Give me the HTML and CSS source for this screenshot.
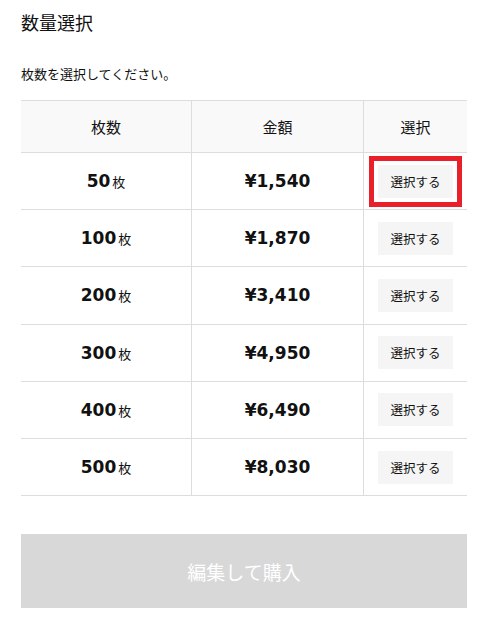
FILE: index.html
```html
<!DOCTYPE html>
<html lang="ja">
<head>
<meta charset="utf-8">
<link rel="stylesheet" href="styles.css">
</head>
<body>
<div class="page">
  <h2 class="title">数量選択</h2>
  <p class="lead">枚数を選択してください。</p>
  <table class="qty">
    <thead>
      <tr><th class="c1">枚数</th><th class="c2">金額</th><th class="c3">選択</th></tr>
    </thead>
    <tbody>
      <tr><td><span class="num">50</span><span class="unit">枚</span></td><td class="price">¥1,540</td><td><button class="sel active">選択する</button></td></tr>
      <tr><td><span class="num">100</span><span class="unit">枚</span></td><td class="price">¥1,870</td><td><button class="sel">選択する</button></td></tr>
      <tr><td><span class="num">200</span><span class="unit">枚</span></td><td class="price">¥3,410</td><td><button class="sel">選択する</button></td></tr>
      <tr><td><span class="num">300</span><span class="unit">枚</span></td><td class="price">¥4,950</td><td><button class="sel">選択する</button></td></tr>
      <tr><td><span class="num">400</span><span class="unit">枚</span></td><td class="price">¥6,490</td><td><button class="sel">選択する</button></td></tr>
      <tr><td><span class="num">500</span><span class="unit">枚</span></td><td class="price">¥8,030</td><td><button class="sel">選択する</button></td></tr>
    </tbody>
  </table>
  <button class="buy">編集して購入</button>
</div>
</body>
</html>
```
FILE: styles.css
```css
html, body { margin: 0; padding: 0; background: #fff; }
body {
  font-family: "Noto Sans", "Noto Sans CJK JP", sans-serif;
  color: #111;
}
.page { width: 446px; padding: 0 20px 0 21px; }
.title {
  margin: 0;
  padding-top: 9px;
  font-size: 18px;
  font-weight: 400;
  line-height: 26px;
  font-family: "Noto Sans CJK JP", sans-serif;
}
.lead {
  margin: 29px 0 0;
  font-size: 13px;
  line-height: 20px;
  font-family: "Noto Sans CJK JP", sans-serif;
}
.qty {
  margin-top: 16px;
  width: 446px;
  border-collapse: collapse;
  table-layout: fixed;
}
.qty th, .qty td {
  border: 1px solid #dddddd;
  text-align: center;
  vertical-align: middle;
  padding: 0;
}
.qty tr > :first-child { border-left: none; }
.qty tr > :last-child { border-right: none; }
.qty th {
  background: #f9f9f9;
  height: 51px;
  font-weight: 400;
  font-size: 15px;
  font-family: "Noto Sans CJK JP", sans-serif;
}
.c1 { width: 170px; }
.c2 { width: 171px; }
.qty td { height: 56.2px; }
.num {
  font-weight: 700;
  font-size: 17px;
  font-family: "DejaVu Sans", sans-serif;
}
.unit {
  font-size: 13px;
  margin-left: 2px;
  font-family: "Noto Sans CJK JP", sans-serif;
}
.price {
  font-weight: 700;
  font-size: 17px;
  font-family: "DejaVu Sans", "Noto Sans CJK JP", sans-serif;
}
.sel {
  width: 75px;
  height: 33px;
  border: none;
  background: #f5f5f5;
  font-size: 12.5px;
  color: #111;
  font-family: "Noto Sans CJK JP", sans-serif;
  padding: 0;
  cursor: pointer;
}
.sel.active {
  outline: 5px solid #e8202a;
  outline-offset: 4px;
}
.buy {
  display: block;
  margin-top: 38px;
  width: 446px;
  height: 74px;
  border: none;
  background: #d8d8d8;
  color: #fff;
  font-size: 19px;
  font-family: "Noto Sans CJK JP", sans-serif;
  padding: 0;
}
```
